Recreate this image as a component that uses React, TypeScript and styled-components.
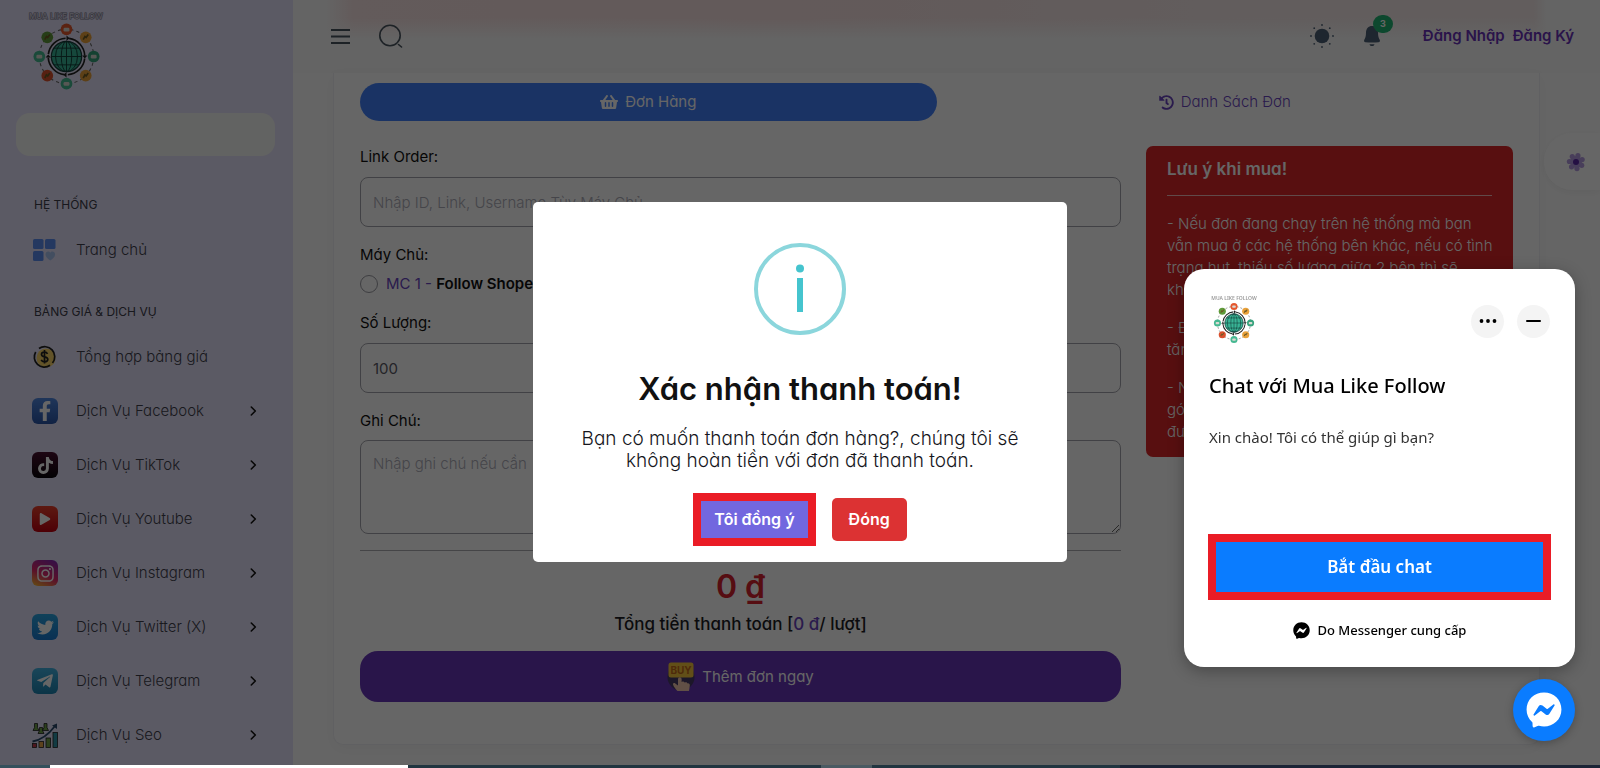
import React from 'react';
import styled, { createGlobalStyle } from 'styled-components';
import {
  FaShoppingBasket,
  FaHistory,
  FaFacebookF,
  FaTiktok,
  FaInstagram,
  FaTwitter,
  FaTelegramPlane,
  FaFacebookMessenger,
  FaPlay,
} from 'react-icons/fa';

const GlobalStyle = createGlobalStyle`
  * { box-sizing: border-box; }
  body {
    margin: 0;
    background: #fff;
    font-family: Inter, "Liberation Sans", sans-serif;
    font-feature-settings: "cv11";
    font-size: 15px;
    line-height: 22px;
    color: #111;
  }
  button, input, textarea { font: inherit; font-feature-settings: inherit; color: inherit; }
  a { text-decoration: none; }
  h1, h2, h3, p, ul { margin: 0; padding: 0; }
`;

const Shell = styled.div`
  display: flex;
  min-height: calc(100vh - 3px);
`;

/* ---------- sidebar ---------- */
const Sidebar = styled.aside`
  flex: 0 0 293px;
  padding-top: 10px;
  background: #e4e1f9;
`;

const Brand = styled.a`
  display: flex;
  flex-direction: column;
  width: 76px;
  margin-left: 28px;
  align-items: center;
`;

const BrandName = styled.span<{ $small?: boolean }>`
  font-size: ${(p) => (p.$small ? 5 : 8)}px;
  line-height: ${(p) => (p.$small ? 8 : 12)}px;
  font-weight: 600;
  white-space: nowrap;
  color: ${(p) => (p.$small ? '#999' : '#d0cddf')};
  -webkit-text-stroke: ${(p) => (p.$small ? 0 : 1)}px #77758a;
  paint-order: stroke fill;
`;

const SideSearch = styled.input`
  display: block;
  width: calc(100% - 34px);
  height: 43px;
  margin: 22px 0 0 16px;
  padding: 0 16px;
  border: 0;
  border-radius: 14px;
  background: #f6f7f5;
`;

const GroupTitle = styled.h2<{ $top: number }>`
  margin: ${(p) => p.$top}px 0 0 34px;
  font-size: 12px;
  line-height: 20px;
  font-weight: 400;
  color: #3c3c4a;
`;

const NavList = styled.ul`
  margin-top: 8px;
  list-style: none;
`;

const NavLink = styled.a`
  display: flex;
  align-items: center;
  height: 54px;
  padding: 0 36px 0 32px;
  color: #3f3f4d;
  font-size: 15px;
  font-weight: 300;
`;

const NavLabel = styled.span`
  flex: 1;
  margin-left: 18px;
`;

const Tile = styled.span<{ $bg: string; $size?: number }>`
  display: grid;
  place-items: center;
  width: 26px;
  height: 26px;
  border-radius: 6px;
  background: ${(p) => p.$bg};
  color: #fff;
  font-size: ${(p) => p.$size ?? 16}px;
`;

/* ---------- main area ---------- */
const Main = styled.div`
  flex: 1;
  min-width: 0;
  background: #fdfdfd;
`;

const TopBar = styled.header`
  display: flex;
  align-items: center;
  height: 73px;
  padding: 0 26px 2px 36px;
  background:
    linear-gradient(rgba(249, 249, 249, 0) 18px, #f9f9f9 38px),
    linear-gradient(90deg, #f9f9f9 34px, #f8e3e3 60px, #f7e0e0 500px, #f5e8e8 900px, #f5e9e9 calc(100% - 66px), #f9f9f9 calc(100% - 54px));
`;

const IconButton = styled.button<{ $ml?: number }>`
  position: relative;
  display: grid;
  place-items: center;
  width: 24px;
  height: 24px;
  margin-left: ${(p) => p.$ml ?? 0}px;
  padding: 0;
  border: 0;
  background: none;
  color: #4c6075;
`;

const Badge = styled.span`
  position: absolute;
  top: -9px;
  right: -9px;
  width: 20px;
  height: 18px;
  border-radius: 9px;
  background: #22b573;
  color: #fff;
  font-size: 9px;
  line-height: 18px;
  font-weight: 700;
`;

const Spacer = styled.div`
  flex: 1;
`;

const AuthLink = styled.a<{ $ml: number }>`
  margin-left: ${(p) => p.$ml}px;
  font-weight: 600;
  color: #6a32ba;
`;

const Card = styled.main`
  margin: 0 60px 0 40px;
  padding: 10px 26px 42px;
  border: 1px solid #f1f1f4;
  border-top: 0;
  border-radius: 0 0 10px 10px;
  background: #fff;
  box-shadow: 0 4px 14px rgba(0, 0, 0, 0.04);
`;

const Tabs = styled.nav`
  display: flex;
`;

const Tab = styled.button<{ $active?: boolean }>`
  display: flex;
  flex: 1;
  align-items: center;
  justify-content: center;
  gap: 7px;
  height: 38px;
  border: 0;
  border-radius: 19px;
  background: ${(p) => (p.$active ? '#4381fa' : 'transparent')};
  color: ${(p) => (p.$active ? '#fff' : '#6a45c0')};
  font-weight: ${(p) => (p.$active ? 400 : 300)};
`;

const Columns = styled.div`
  display: grid;
  grid-template-columns: minmax(0, 761fr) minmax(0, 367fr);
  gap: 25px;
  align-items: start;
  margin-top: 25px;
`;

const Form = styled.form`
  display: flex;
  flex-direction: column;
`;

const Label = styled.label<{ $top?: number }>`
  margin-top: ${(p) => p.$top ?? 0}px;
  line-height: 22px;
`;

const TextField = styled.input`
  height: 50px;
  margin-top: 9px;
  padding: 0 12px;
  border: 1px solid #a4a4ac;
  border-radius: 8px;
  background: #fff;
  color: #5b5b66;
  &::placeholder { color: #acacb8; font-weight: 300; font-feature-settings: normal; }
`;

const TextArea = styled.textarea`
  height: 94px;
  margin-top: 8px;
  padding: 12px 12px;
  border: 1px solid #a4a4ac;
  border-radius: 8px;
  background: #fff;
  &::placeholder { color: #acacb8; font-weight: 300; font-feature-settings: normal; }
`;

const ServerRow = styled.label`
  display: flex;
  align-items: center;
  gap: 8px;
  margin-top: 7px;
`;

const ServerName = styled.strong`
  font-weight: 600;
`;

const Radio = styled.input`
  appearance: none;
  width: 18px;
  height: 18px;
  margin: 0;
  border: 1px solid #9a9aa2;
  border-radius: 50%;
`;

const Violet = styled.span`
  color: #6a45c0;
`;

const Rule = styled.hr<{ $top: number; $color: string }>`
  width: 100%;
  height: 1px;
  margin: ${(p) => p.$top}px 0 0;
  border: 0;
  background: ${(p) => p.$color};
`;

const Total = styled.div`
  margin-top: 16px;
  text-align: center;
  font-size: 32px;
  line-height: 40px;
  font-weight: 600;
  color: #d6222e;
`;

const TotalNote = styled.p`
  margin-top: 6px;
  text-align: center;
  font-size: 17px;
  font-weight: 500;
  color: #1c1c24;
`;

const BuyButton = styled.button`
  display: flex;
  align-items: center;
  justify-content: center;
  gap: 7px;
  height: 51px;
  margin-top: 16px;
  border: 0;
  border-radius: 18px;
  background: #6635b8;
  color: #fff;
`;

const Notice = styled.section`
  padding: 12px 21px 14px;
  border-radius: 7px;
  background: #db2629;
  color: #fff;
`;

const NoticeTitle = styled.h3`
  font-size: 17px;
  line-height: 22px;
  font-weight: 600;
`;

const NoticeText = styled.p<{ $top?: number }>`
  margin-top: ${(p) => p.$top ?? 16}px;
  margin-right: -4px;
  font-weight: 300;
`;

const Customizer = styled.button`
  position: fixed;
  top: 133px;
  right: 0;
  width: 56px;
  height: 57px;
  padding: 0 0 0 7px;
  border: 0;
  border-radius: 28px 0 0 28px;
  background: #fff;
  box-shadow: 0 2px 10px rgba(0, 0, 0, 0.06);
  display: grid;
  place-items: center;
`;

const BottomEdge = styled.div`
  height: 3px;
  background: linear-gradient(
    90deg,
    #35505c 0 50px,
    #fff 50px 408px,
    #213540 408px 821px,
    #4a5a62 821px 872px,
    #213540 872px 1120px,
    #1b2436 1120px
  );
`;

/* ---------- dialog ---------- */
const Backdrop = styled.div`
  position: fixed;
  inset: 0 0 3px;
  display: grid;
  place-items: center;
  padding-bottom: 2px;
  background: rgba(0, 0, 0, 0.6);
`;

const Dialog = styled.section`
  display: flex;
  flex-direction: column;
  align-items: center;
  width: 534px;
  padding: 41px 40px 16px;
  border-radius: 5px;
  background: #fff;
`;

const DialogTitle = styled.h1`
  margin-top: 34px;
  font-size: 31px;
  line-height: 40px;
  font-weight: 600;
  white-space: nowrap;
`;

const DialogText = styled.p`
  margin-top: 19px;
  text-align: center;
  font-size: 19px;
  line-height: 22px;
  font-weight: 300;
  color: #16161c;
`;

const DialogActions = styled.div`
  display: flex;
  align-items: center;
  gap: 16px;
  margin-top: 21px;
`;

const DialogButton = styled.button<{ $marked?: boolean }>`
  height: ${(p) => (p.$marked ? 53 : 43)}px;
  padding: 0 ${(p) => (p.$marked ? 13 : 17)}px;
  border: ${(p) => (p.$marked ? '8px solid #ea1c26' : '0')};
  border-radius: ${(p) => (p.$marked ? 0 : 5)}px;
  background: ${(p) => (p.$marked ? '#7267df' : '#dc3233')};
  color: #fff;
  font-size: 16px;
  font-weight: 600;
  white-space: nowrap;
`;

/* ---------- chat ---------- */
const Chat = styled.section`
  position: fixed;
  right: 25px;
  bottom: 101px;
  display: flex;
  flex-direction: column;
  width: 391px;
  height: 398px;
  padding: 24px 24px 26px;
  border-radius: 20px;
  background: #fff;
  box-shadow: 0 4px 16px rgba(0, 0, 0, 0.3);
  font-family: "Noto Sans", "Open Sans", sans-serif;
  color: #000;
`;

const ChatHead = styled.div`
  display: flex;
  align-items: center;
  gap: 13px;
  padding: 0 1px 0 3px;
`;

const Avatar = styled.div`
  display: flex;
  flex-direction: column;
  align-items: center;
  width: 46px;
  height: 56px;
  padding-top: 1px;
`;

const RoundButton = styled.button`
  display: grid;
  place-items: center;
  width: 33px;
  height: 33px;
  padding: 0;
  border: 0;
  border-radius: 50%;
  background: #f4f4f4;
`;

const ChatTitle = styled.h2`
  margin-top: 22px;
  padding-left: 1px;
  font-size: 20px;
  line-height: 30px;
  font-weight: 500;
`;

const ChatText = styled.p`
  margin-top: 25px;
  padding-left: 1px;
  line-height: 22px;
  color: #333;
`;

const StartButton = styled.button`
  height: 66px;
  margin-top: auto;
  border: 8px solid #ea1c26;
  background: #0a7cff;
  color: #fff;
  font-size: 17px;
  font-weight: 600;
`;

const Provider = styled.div`
  display: flex;
  align-items: center;
  justify-content: center;
  gap: 8px;
  margin-top: 19px;
  font-size: 13px;
  line-height: 22px;
  font-weight: 500;
`;

const Fab = styled.button`
  position: fixed;
  right: 25px;
  bottom: 27px;
  display: grid;
  place-items: center;
  width: 62px;
  height: 62px;
  padding: 0;
  border: 0;
  border-radius: 50%;
  background: #0a7cff;
  color: #fff;
  box-shadow: 0 2px 8px rgba(0, 0, 0, 0.25);
`;

/* ---------- drawings ---------- */
const dots = ['#e4572e', '#e9a13b', '#35a27c', '#e9a13b', '#45b891', '#d9502e', '#45b891', '#5f9a3a'];

function Wheel({ size }: { size: number }) {
  return (
    <svg width={size} height={size} viewBox="0 0 66 66" aria-hidden="true">
      <circle cx="33" cy="33" r="26" fill="none" stroke="#666" strokeWidth="1" strokeDasharray="3 3" />
      <circle cx="33" cy="33" r="17.5" fill="none" stroke="#222" strokeWidth="1.6" strokeDasharray="24 3.5" strokeDashoffset="-2" />
      <circle cx="33" cy="33" r="14.5" fill="#39b596" stroke="#143c3a" strokeWidth="1.2" />
      <g fill="none" stroke="#123c38" strokeWidth="0.9">
        <ellipse cx="33" cy="33" rx="5" ry="14.5" />
        <ellipse cx="33" cy="33" rx="10.5" ry="14.5" />
        <path d="M33 18.5v29M18.5 33h29M21 25h24M21 41h24" />
      </g>
      <g fill="#222">
        <path d="M33 13l3 2.5-3 2.5zM33 48l-3 2.5 3 2.5zM48 32h5l-2.500 3zM13 34h5l-2.500-3z" />
      </g>
      {dots.map((c, i) => {
        const a = (i * Math.PI) / 4;
        const x = 33 + 26 * Math.sin(a);
        const y = 33 - 26 * Math.cos(a);
        return (
          <g key={i}>
            <circle cx={x} cy={y} r="5.600" fill={c} />
            {i % 2 ? (
              <path
                d={`M${x - 2.4} ${y + 2.2}l1.600-3 1.200 1 2-2.800`}
                fill="none"
                stroke="#6d5a25"
                strokeWidth="1.600"
              />
            ) : (
              <rect x={x - 2.8} y={y - 1.6} width="5.6" height="3.600" rx="1.200" fill="#d9d9d2" />
            )}
          </g>
        );
      })}
    </svg>
  );
}

const Chevron = () => (
  <svg width="7" height="10" viewBox="0 0 7 10" fill="none" stroke="#111" strokeWidth="1.6" aria-hidden="true">
    <path d="M1.300 1 5.300 5l-4 4" strokeLinecap="round" strokeLinejoin="round" />
  </svg>
);

const HomeIcon = () => (
  <svg width="26" height="26" viewBox="0 0 26 26" aria-hidden="true">
    <rect x="1" y="2" width="10.500" height="10" rx="1.500" fill="#5b8def" />
    <rect x="13" y="2" width="10.500" height="10" rx="1.500" fill="#5b8def" />
    <rect x="1" y="14" width="10.500" height="10" rx="1.500" fill="#5b8def" />
    <path d="M13.500 17.500c0-2 1.200-3 2.700-3 .9 0 1.700.5 2.100 1.200.4-.7 1.200-1.200 2.100-1.200 1.500 0 2.700 1 2.700 3 0 2.300-2.300 4.300-4.800 6-2.500-1.700-4.800-3.700-4.800-6z" fill="#a9c3f0" />
  </svg>
);

const CoinIcon = () => (
  <svg width="26" height="26" viewBox="0 0 26 26" fill="none" stroke="#222" strokeWidth="1.7" aria-hidden="true">
    <circle cx="14" cy="14" r="9.500" fill="#f7d266" stroke="none" />
    <path d="M7 4.500a10 10 0 0 1 13.500 14.500M18 21.300A10 10 0 0 1 3.700 8" />
    <path d="M15.500 9.800c-.6-1.200-1.600-1.600-3-1.600-1.800 0-3 .9-3 2.300 0 3.300 6.300 1.500 6.300 4.800 0 1.500-1.400 2.500-3.300 2.500-1.600 0-2.800-.7-3.300-1.900M12.500 6v13.500" />
  </svg>
);

const SeoIcon = () => (
  <svg width="26" height="26" viewBox="0 0 26 26" aria-hidden="true">
    <g fill="#6ea04a" stroke="#222" strokeWidth="0.8">
      <path d="M2.500 1.500h3v4l1.500 3h-6l1.500-3zM12 1.500h3v4l1.500 3h-6l1.500-3zM7.500 5.500h3v3l1.500 3H6l1.500-3z" />
    </g>
    <path d="M.5 19.500C9 18 17 12 23 4" fill="none" stroke="#2b4a6b" strokeWidth="1.800" />
    <path d="M20 3.500 25 1.500v5.500z" fill="#2b4a6b" />
    <g stroke="#222" strokeWidth="0.8">
      <rect x=".5" y="21.500" width="4" height="4" fill="#c23b4e" />
      <rect x="7" y="19.500" width="4.500" height="6" fill="#e6a64a" />
      <rect x="14" y="16" width="4.500" height="9.500" fill="#6ea04a" />
      <rect x="21" y="10.500" width="4.500" height="15" fill="#2d93a8" />
    </g>
  </svg>
);

const MenuIcon = () => (
  <svg width="20" height="18" viewBox="0 0 20 18" stroke="#4a5560" strokeWidth="2" aria-hidden="true">
    <path d="M0 3h19M0 9.500h19M0 16h19" />
  </svg>
);

const SearchIcon = () => (
  <svg width="24" height="24" viewBox="0 0 24 24" fill="none" stroke="#4a5560" strokeWidth="1.600" aria-hidden="true">
    <circle cx="11" cy="11.500" r="10.200" />
    <path d="M19.500 20.500l3 2.500" strokeLinecap="round" />
  </svg>
);

const SunIcon = () => (
  <svg width="24" height="24" viewBox="0 0 24 24" fill="#4c6075" aria-hidden="true">
    <circle cx="12" cy="12" r="7.300" />
    {Array.from({ length: 8 }, (_, i) => (
      <circle
        key={i}
        cx={12 + 11 * Math.cos((i * Math.PI) / 4)}
        cy={12 + 11 * Math.sin((i * Math.PI) / 4)}
        r="0.900"
      />
    ))}
  </svg>
);

const BellIcon = () => (
  <svg width="20" height="22" viewBox="0 0 20 22" fill="#4c6075" aria-hidden="true">
    <path d="M10 1c3.500 0 6 2.700 6 6.500 0 4 .8 5.500 1.700 7.200.7 1.300 0 2.300-1.200 2.500-4.300.5-8.700.5-13 0-1.200-.2-1.900-1.200-1.200-2.500C3.200 13 4 11.500 4 7.500 4 3.700 6.500 1 10 1zM7.500 19.200h5c-.3 1.200-1.200 1.900-2.500 1.900s-2.200-.7-2.500-1.900z" />
  </svg>
);

const FlowerIcon = () => (
  <svg width="20" height="20" viewBox="0 0 20 20" aria-hidden="true">
    {Array.from({ length: 7 }, (_, i) => (
      <circle
        key={i}
        cx={10 + 6.6 * Math.sin((i * 2 * Math.PI) / 7 + 0.3)}
        cy={10 - 6.6 * Math.cos((i * 2 * Math.PI) / 7 + 0.3)}
        r="2.600"
        fill="#b49be0"
      />
    ))}
    <circle cx="10" cy="10" r="6" fill="#b49be0" />
    <circle cx="10" cy="10" r="3" fill="#5a28a8" />
  </svg>
);

const BuyIcon = () => (
  <svg width="28" height="30" viewBox="0 0 28 30" aria-hidden="true">
    <circle cx="14" cy="15" r="13.500" fill="#463a68" />
    <rect x="1.500" y="0.500" width="25" height="15" rx="2.500" fill="#f5c63c" />
    <text x="14" y="12" textAnchor="middle" fontSize="10" fontWeight="700" fill="#c46a1c">BUY</text>
    <path d="M11 17a1.800 1.800 0 0 1 3.600 0v3l1-.4c1 0 1.600.4 1.900 1l1.200-.3c1 0 1.500.5 1.700 1.100 1.800-.3 2.600.7 2.400 2.300l-.8 5.300H10.500c-2-2-3.800-4.300-4.500-6.500-.3-1.500 1.300-2 2.300-1.100l2.700 2z" fill="#f3c9ae" />
  </svg>
);

const InfoIcon = () => (
  <svg width="92" height="92" viewBox="0 0 92 92" aria-hidden="true">
    <circle cx="46" cy="46" r="44" fill="none" stroke="#8bd6dc" strokeWidth="4" />
    <circle cx="46" cy="25.500" r="4" fill="#45c4ce" />
    <rect x="43" y="35" width="6" height="34" fill="#45c4ce" />
  </svg>
);

const services = [
  { name: 'Dịch Vụ Facebook', icon: <Tile $bg="linear-gradient(#5087e0, #2a55a8)" $size={20}><FaFacebookF /></Tile> },
  { name: 'Dịch Vụ TikTok', icon: <Tile $bg="linear-gradient(#4a1030, #08040a)" $size={17}><FaTiktok /></Tile> },
  { name: 'Dịch Vụ Youtube', icon: <Tile $bg="linear-gradient(#e8402c, #c00010)" $size={12}><FaPlay /></Tile> },
  { name: 'Dịch Vụ Instagram', icon: <Tile $bg="linear-gradient(25deg, #f9c22e, #e0286a 45%, #7a2ab8)" $size={19}><FaInstagram /></Tile> },
  { name: 'Dịch Vụ Twitter (X)', icon: <Tile $bg="linear-gradient(#2ba4e0, #1a7ad0)" $size={17}><FaTwitter /></Tile> },
  { name: 'Dịch Vụ Telegram', icon: <Tile $bg="linear-gradient(#41b0e0, #1e83b0)" $size={18}><FaTelegramPlane /></Tile> },
  { name: 'Dịch Vụ Seo', icon: <SeoIcon /> },
];

export default function App() {
  return (
    <>
      <GlobalStyle />
      <Shell>
        <Sidebar>
          <Brand href="#">
            <BrandName>MUA LIKE FOLLOW</BrandName>
            <Wheel size={69} />
          </Brand>
          <SideSearch aria-label="Tìm kiếm" />
          <GroupTitle $top={39}>HỆ THỐNG</GroupTitle>
          <NavList>
            <li>
              <NavLink href="#">
                <HomeIcon />
                <NavLabel>Trang chủ</NavLabel>
              </NavLink>
            </li>
          </NavList>
          <GroupTitle $top={25}>BẢNG GIÁ &amp; DỊCH VỤ</GroupTitle>
          <NavList>
            <li>
              <NavLink href="#">
                <CoinIcon />
                <NavLabel>Tổng hợp bảng giá</NavLabel>
              </NavLink>
            </li>
            {services.map((s) => (
              <li key={s.name}>
                <NavLink href="#">
                  {s.icon}
                  <NavLabel>{s.name}</NavLabel>
                  <Chevron />
                </NavLink>
              </li>
            ))}
          </NavList>
        </Sidebar>

        <Main>
          <TopBar>
            <IconButton aria-label="Menu"><MenuIcon /></IconButton>
            <IconButton $ml={26} aria-label="Tìm kiếm"><SearchIcon /></IconButton>
            <Spacer />
            <IconButton aria-label="Giao diện"><SunIcon /></IconButton>
            <IconButton $ml={26} aria-label="Thông báo">
              <BellIcon />
              <Badge>3</Badge>
            </IconButton>
            <AuthLink $ml={39} href="#">Đăng Nhập</AuthLink>
            <AuthLink $ml={8} href="#">Đăng Ký</AuthLink>
          </TopBar>

          <Card>
            <Tabs>
              <Tab $active><FaShoppingBasket size={18} />Đơn Hàng</Tab>
              <Tab><FaHistory size={15} />Danh Sách Đơn</Tab>
            </Tabs>
            <Columns>
              <Form>
                <Label htmlFor="link">Link Order:</Label>
                <TextField id="link" placeholder="Nhập ID, Link, Username Tùy Máy Chủ" />
                <Label as="span" $top={17}>Máy Chủ:</Label>
                <ServerRow>
                  <Radio type="radio" name="server" />
                  <span><Violet>MC 1 -</Violet> <ServerName>Follow Shopee</ServerName></span>
                </ServerRow>
                <Label $top={17} htmlFor="qty">Số Lượng:</Label>
                <TextField id="qty" defaultValue="100" />
                <Label $top={17} htmlFor="note">Ghi Chú:</Label>
                <TextArea id="note" placeholder="Nhập ghi chú nếu cần" />
                <Rule $top={16} $color="#acacb2" />
                <Total>0 ₫</Total>
                <TotalNote>Tổng tiền thanh toán [<Violet>0 đ</Violet>/ lượt]</TotalNote>
                <BuyButton type="button"><BuyIcon />Thêm đơn ngay</BuyButton>
              </Form>
              <Notice>
                <NoticeTitle>Lưu ý khi mua!</NoticeTitle>
                <Rule $top={15} $color="#f3b9ba" />
                <NoticeText $top={17}>
                  - Nếu đơn đang chạy trên hệ thống mà bạn vẫn mua ở các hệ thống bên khác, nếu có tình
                  trạng hụt, thiếu số lượng giữa 2 bên thì sẽ<br />không
                </NoticeText>
                <NoticeText>
                  - Đơn<br />tăng
                </NoticeText>
                <NoticeText>
                  - Nếu<br />gói<br />được
                </NoticeText>
              </Notice>
            </Columns>
          </Card>
        </Main>
      </Shell>
      <BottomEdge />
      <Customizer aria-label="Tùy chỉnh"><FlowerIcon /></Customizer>

      <Backdrop>
        <Dialog role="dialog" aria-modal="true" aria-labelledby="dialog-title">
          <InfoIcon />
          <DialogTitle id="dialog-title">Xác nhận thanh toán!</DialogTitle>
          <DialogText>Bạn có muốn thanh toán đơn hàng?, chúng tôi sẽ không hoàn tiền với đơn đã thanh toán.</DialogText>
          <DialogActions>
            <DialogButton $marked>Tôi đồng ý</DialogButton>
            <DialogButton>Đóng</DialogButton>
          </DialogActions>
        </Dialog>
      </Backdrop>

      <Chat>
        <ChatHead>
          <Avatar>
            <BrandName $small>MUA LIKE FOLLOW</BrandName>
            <Wheel size={42} />
          </Avatar>
          <Spacer />
          <RoundButton aria-label="Thêm">
            <svg width="18" height="4" viewBox="0 0 18 4" aria-hidden="true">
              <circle cx="2.500" cy="2" r="1.900" /><circle cx="9" cy="2" r="1.900" /><circle cx="15.500" cy="2" r="1.900" />
            </svg>
          </RoundButton>
          <RoundButton aria-label="Thu nhỏ">
            <svg width="15" height="2" viewBox="0 0 15 2" aria-hidden="true"><rect width="15" height="2" rx="1" /></svg>
          </RoundButton>
        </ChatHead>
        <ChatTitle>Chat với Mua Like Follow</ChatTitle>
        <ChatText>Xin chào! Tôi có thể giúp gì bạn?</ChatText>
        <StartButton>Bắt đầu chat</StartButton>
        <Provider><FaFacebookMessenger size={17} />Do Messenger cung cấp</Provider>
      </Chat>
      <Fab aria-label="Messenger"><FaFacebookMessenger size={36} /></Fab>
    </>
  );
}
